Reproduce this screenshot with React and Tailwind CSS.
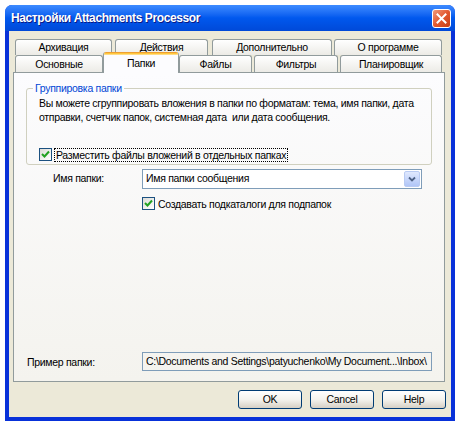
import React from "react";

function Tab({ label, className = "" }) {
  return (
    <div
      className={`flex h-full items-center justify-center rounded-t-[3px] border border-b-0 border-[#919B9C] bg-gradient-to-b from-white to-[#ECEBE6] text-[10.5px] leading-none tracking-[-0.3px] text-black ${className}`}
    >
      {label}
    </div>
  );
}

function ActiveTab({ label, className = "" }) {
  return (
    <div className={`relative z-10 -mb-px flex h-[21px] flex-col overflow-hidden rounded-t-[3px] border-x border-[#919B9C] bg-[#FCFCFE] ${className}`}>
      <div className="h-[3px] bg-gradient-to-b from-[#E68B2C] via-[#FFC73C] to-[#FFE6A0]" />
      <div className="flex flex-1 items-center justify-center pb-[2px] text-[10.5px] leading-none tracking-[-0.3px] text-black">
        {label}
      </div>
    </div>
  );
}

function Check() {
  return (
    <div className="flex h-[13px] w-[13px] shrink-0 items-center justify-center border border-[#1C5180] bg-gradient-to-br from-[#DCDCD7] to-white">
      <svg width="9" height="9" viewBox="0 0 9 9">
        <path d="M1 4 L3.5 6.5 L8 1.5" fill="none" stroke="#21A121" strokeWidth="2" />
      </svg>
    </div>
  );
}

function XpButton({ label }) {
  return (
    <div className="flex h-[19px] w-[64px] items-center justify-center rounded-[3px] border border-[#003C74] bg-gradient-to-b from-white via-[#F4F3EE] to-[#D6D0C5] text-[10.5px] leading-none tracking-[-0.3px] text-black">
      {label}
    </div>
  );
}

export default function App() {
  return (
    <div className="h-[424px] w-[460px] bg-white pl-[5px] pt-[5px] font-['Liberation_Sans',sans-serif] text-black">
      <div className="flex h-[416px] w-[450px] flex-col rounded-t-[7px] bg-[#0831D9]">
        {/* title bar */}
        <div className="flex h-[26px] shrink-0 items-center justify-between rounded-t-[7px] bg-gradient-to-b from-[#3D8BFF] via-[#0058EE] to-[#0049D8] pl-[6px] pr-[4px]">
          <span className="text-[12px] font-bold tracking-[-0.4px] text-white [text-shadow:1px_1px_#0A1883]">
            Настройки Attachments Processor
          </span>
          <div className="flex h-[19px] w-[19px] items-center justify-center rounded-[3px] border border-white bg-gradient-to-br from-[#F19A7A] via-[#E2582F] to-[#C73E12]">
            <svg width="11" height="11" viewBox="0 0 11 11">
              <path d="M1.5 1.5 L9.5 9.5 M9.5 1.5 L1.5 9.5" stroke="white" strokeWidth="2" strokeLinecap="square" />
            </svg>
          </div>
        </div>

        {/* body */}
        <div className="mx-[4px] mb-[4px] flex flex-1 flex-col bg-[#ECE9D8] pl-[4px] pt-[8px]">
          {/* tab rows */}
          <div className="flex h-[16px] pl-[2px]">
            <Tab label="Архивация" className="w-[97px]" />
            <Tab label="Действия" className="ml-[3px] w-[93px]" />
            <Tab label="Дополнительно" className="ml-[4px] w-[120px]" />
            <Tab label="О программе" className="ml-[2px] w-[108px]" />
          </div>
          <div className="flex h-[17px] items-end pl-[2px]">
            <Tab label="Основные" className="w-[88px]" />
            <ActiveTab label="Папки" className="w-[76px]" />
            <Tab label="Файлы" className="w-[73px]" />
            <Tab label="Фильтры" className="ml-[2px] w-[84px]" />
            <Tab label="Планировщик" className="ml-[2px] w-[102px]" />
          </div>

          {/* tab page */}
          <div className="flex h-[310px] w-[432px] flex-col border border-[#919B9C] bg-gradient-to-b from-[#FCFCFE] to-[#F4F3EE] text-[10.5px] tracking-[-0.3px]">
            <div className="relative ml-[12px] mt-[15px] h-[77px] w-[406px] rounded-[3px] border border-[#D0D0BF] pl-[12px] pt-[7px]">
              <span className="absolute -top-[8px] left-[6px] bg-[#FCFCFE] px-[2px] leading-[14px] text-[#0046D5]">
                Группировка папки
              </span>
              <p className="whitespace-nowrap leading-[14px]">
                Вы можете сгруппировать вложения в папки по форматам: тема, имя папки, дата
                <br />
                отправки, счетчик папок, системная дата&nbsp; или дата сообщения.
              </p>
              <div className="mt-[24px] flex h-[13px] items-center gap-[2px]">
                <Check />
                <span className="border border-dotted border-black px-[1px] leading-[12px]">
                  Разместить файлы вложений в отдельных папках
                </span>
              </div>
            </div>

            <div className="mt-[4px] flex h-[20px] items-center pl-[39px]">
              <span className="w-[89px]">Имя папки:</span>
              <div className="flex h-[20px] w-[280px] items-center justify-between border border-[#7F9DB9] bg-white pl-[3px] pr-px">
                <span>Имя папки сообщения</span>
                <div className="flex h-[16px] w-[16px] items-center justify-center rounded-[2px] border border-[#B9CBF3] bg-gradient-to-b from-[#E0E9FE] to-[#B1C6F7]">
                  <svg width="8" height="6" viewBox="0 0 8 6">
                    <path d="M1 1.5 L4 4.5 L7 1.5" fill="none" stroke="#4D6185" strokeWidth="1.8" />
                  </svg>
                </div>
              </div>
            </div>
            <div className="mt-[8px] flex h-[13px] items-center gap-[3px] pl-[128px]">
              <Check />
              <span className="leading-[12px]">Создавать подкаталоги для подпапок</span>
            </div>

            <div className="mb-[10px] mt-auto flex items-center pl-[13px]">
              <span className="w-[115px] pt-[3px]">Пример папки:</span>
              <div className="flex h-[19px] w-[290px] items-center whitespace-nowrap border border-[#7F9DB9] pl-[3px]">
                C:\Documents and Settings\patyuchenko\My Document...\Inbox\
              </div>
            </div>
          </div>

          {/* dialog buttons */}
          <div className="mt-[8px] flex gap-[8px] pl-[225px]">
            <XpButton label="OK" />
            <XpButton label="Cancel" />
            <XpButton label="Help" />
          </div>
        </div>
      </div>
    </div>
  );
}
